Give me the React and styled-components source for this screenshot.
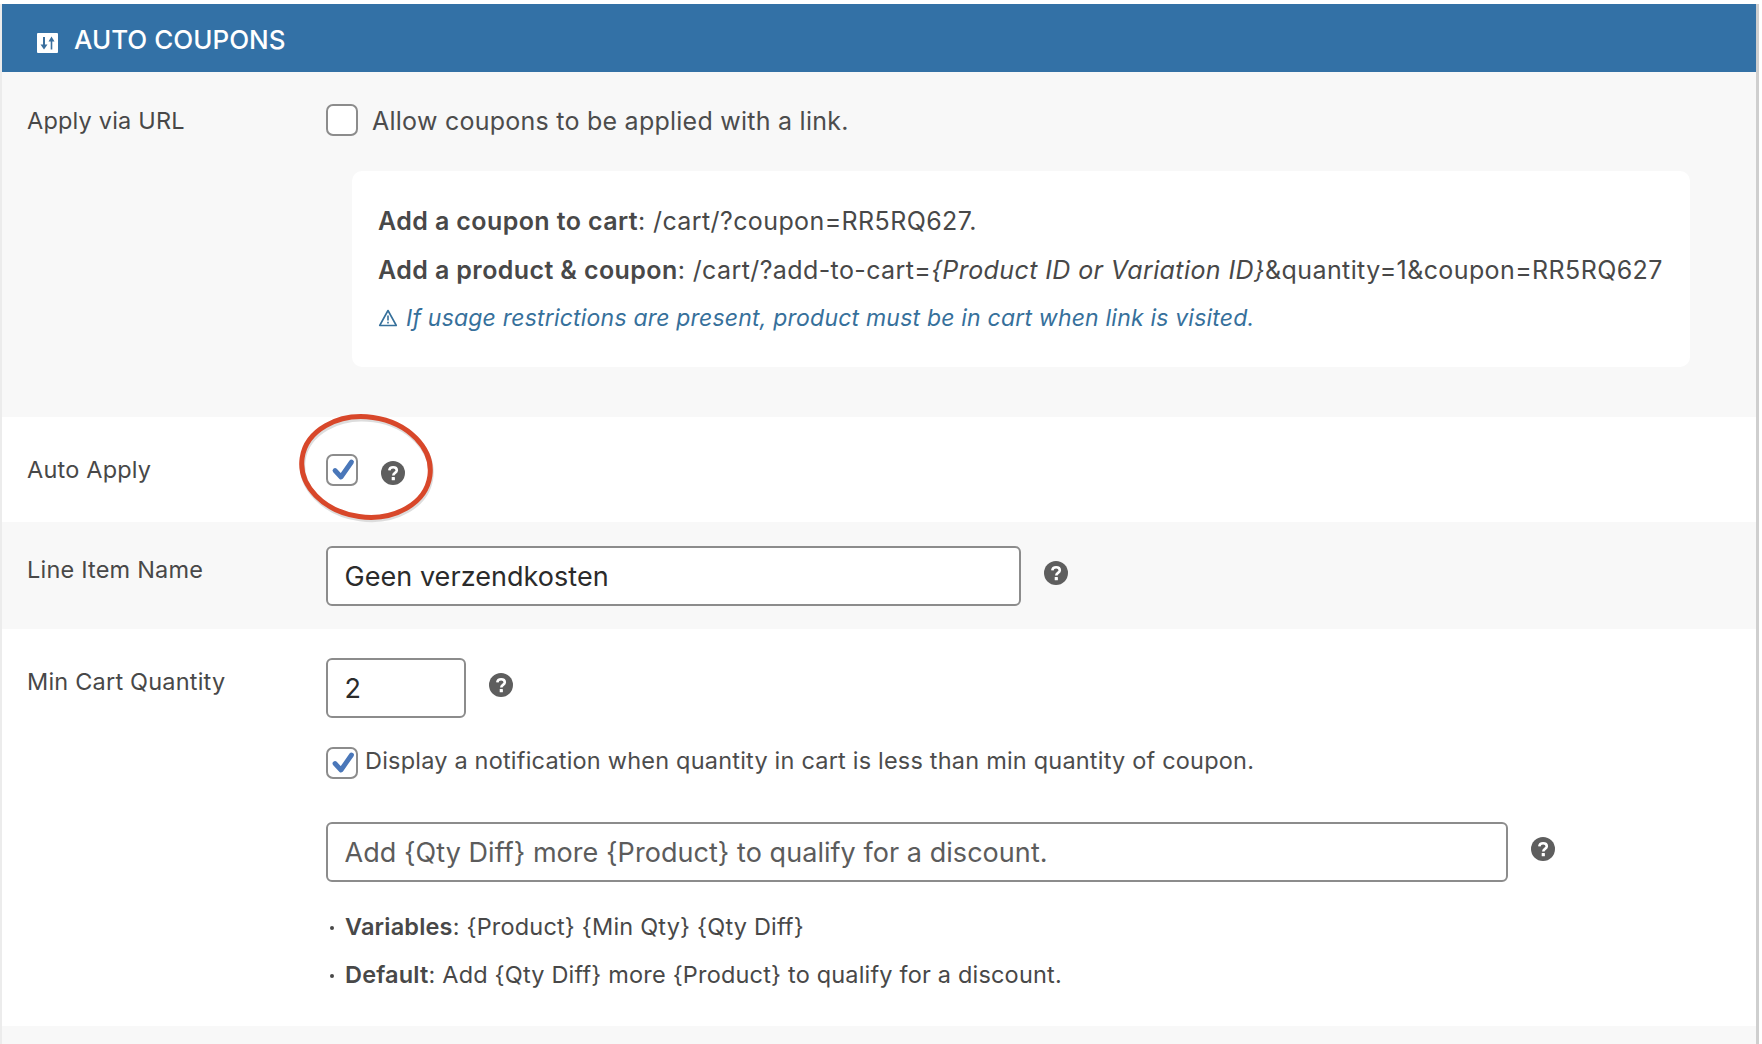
import React from 'react';
import styled, { createGlobalStyle } from 'styled-components';

const GlobalStyle = createGlobalStyle`
  html, body {
    margin: 0;
    padding: 0;
    background: #fff;
  }
  body {
    font-family: Inter, "Liberation Sans", sans-serif;
    color: #444;
    overflow: hidden;
  }
`;

const Page = styled.div`
  width: 1762px;
  height: 1044px;
  padding-top: 4px;
  box-sizing: border-box;
  overflow: hidden;
`;

const Panel = styled.div`
  width: 1759px;
  box-sizing: border-box;
  border-left: 2px solid #ececec;
  border-right: 3px solid #cfcfcf;
`;

const Header = styled.div`
  height: 68px;
  background: #3371a6;
  display: flex;
  align-items: center;
  padding-left: 33px;
  gap: 15px;
  color: #fff;
  font-size: 26px;
  font-weight: 500;
`;

const HeaderTitle = styled.span`
  position: relative;
  top: 1px;
`;

const Row = styled.div`
  display: grid;
  grid-template-columns: 299px 1fr;
  padding-left: 25px;
  height: ${(p) => p.$height}px;
  padding-top: ${(p) => p.$top}px;
  box-sizing: border-box;
  background: ${(p) => (p.$alt ? '#f8f8f8' : '#fff')};
`;

const Label = styled.div`
  font-size: 23.5px;
  line-height: 32px;
  letter-spacing: 0.2px;
  color: #484848;
  padding-top: ${(p) => p.$offset || 0}px;
`;

const Field = styled.div`
  display: flex;
  flex-direction: column;
  align-items: flex-start;
`;

const Line = styled.div`
  display: flex;
  align-items: center;
  gap: ${(p) => p.$gap || 0}px;
  margin-top: ${(p) => p.$mt || 0}px;
`;

const Box = styled.span`
  position: relative;
  display: block;
  flex: none;
  width: 32px;
  height: 32px;
  box-sizing: border-box;
  border: 2px solid #8c8c8c;
  border-radius: 7px;
  background: #fff;
`;

const CheckLabel = styled.span`
  font-size: ${(p) => p.$size}px;
  line-height: 32px;
  letter-spacing: ${(p) => p.$spacing}px;
  position: relative;
  top: ${(p) => p.$shift}px;
  color: #4c4c4c;
`;

const InfoBox = styled.div`
  width: 1338px;
  height: 196px;
  margin: 35px 0 0 26px;
  padding: 26px 0 0 26px;
  box-sizing: border-box;
  background: #fff;
  border-radius: 10px;
`;

const InfoLine = styled.div`
  font-size: 25px;
  line-height: 48.5px;
  letter-spacing: 0.4px;
  color: #484848;
  white-space: nowrap;
  strong {
    font-weight: 600;
  }
`;

const Warning = styled(InfoLine)`
  display: flex;
  align-items: center;
  gap: 8px;
  font-size: 23px;
  letter-spacing: 0.2px;
  font-style: italic;
  color: #36709b;
`;

const Input = styled.div`
  width: ${(p) => p.$width}px;
  height: 60px;
  box-sizing: border-box;
  padding-left: 16.5px;
  display: flex;
  align-items: center;
  flex: none;
  border: 2px solid #8c8c8c;
  border-radius: 6px;
  background: #fff;
  font-size: 27px;
  letter-spacing: 0.05px;
  color: ${(p) => (p.$placeholder ? '#5c5c5c' : '#2b2b2b')};
  white-space: nowrap;
`;

const Notes = styled.div`
  margin-top: 21px;
`;

const Note = styled.div`
  font-size: 23.5px;
  line-height: 48px;
  letter-spacing: 0.18px;
  color: #484848;
  display: flex;
  align-items: center;
  white-space: nowrap;
  strong {
    font-weight: 600;
  }
  &::before {
    content: '';
    width: 4px;
    height: 4px;
    margin: 2px 11px 0 4px;
    border-radius: 50%;
    background: #484848;
  }
`;

const AutoField = styled.div`
  position: relative;
`;

const Circled = styled.svg`
  position: absolute;
  left: -30px;
  top: -42px;
  width: 140px;
  height: 108px;
  pointer-events: none;
  overflow: visible;
`;

const HelpWrap = styled.svg`
  display: block;
  flex: none;
  width: 24px;
  height: 24px;
  margin-top: ${(p) => p.$mt || 0}px;
`;

const CheckMark = styled.svg`
  position: absolute;
  left: 0;
  top: 0;
  width: 28px;
  height: 28px;
`;

const ItemRow = styled(Line)`
  align-self: start;
`;

const HeaderIcon = () => (
  <svg width="24" height="20" viewBox="0 0 24 20" style={{ marginTop: 9 }}>
    <rect x="2" y="0" width="21" height="20" rx="1" fill="#fff" />
    <path d="M9 4v9" fill="none" stroke="#3a6f9e" strokeWidth="2" />
    <path d="M5.500 11.500h7L9 16.500z" fill="#3a6f9e" />
    <path d="M16.500 16.500V8" fill="none" stroke="#3a6f9e" strokeWidth="1.600" />
    <path d="M13.500 8.500h6l-3-5z" fill="#3a6f9e" />
  </svg>
);

const Help = ({ mt }) => (
  <HelpWrap $mt={mt} viewBox="0 0 24 24">
    <circle cx="12" cy="12" r="12" fill="#5e5e5e" />
    <path d="M8.300 9.400c.2-2 1.700-3.100 3.800-3.100 2.200 0 3.700 1.200 3.700 3 0 2.600-3.500 2.600-3.500 5.100" fill="none" stroke="#fff" strokeWidth="2.600" />
    <rect x="10.700" y="16" width="3.200" height="3.200" rx=".5" fill="#fff" />
  </HelpWrap>
);

const Check = () => (
  <CheckMark viewBox="0 0 28 28">
    <path d="M7 14.500l6 6.500L23.500 6" fill="none" stroke="#4a77b9" strokeWidth="4.800" strokeLinejoin="round" strokeLinecap="round" />
  </CheckMark>
);

const WarningIcon = () => (
  <svg width="20" height="20" viewBox="0 0 20 20">
    <path d="M10 2.500L18.300 17.500H1.700z" fill="none" stroke="#36709b" strokeWidth="1.600" strokeLinejoin="round" />
    <path d="M10 7.500v5M10 13.800v1.600" fill="none" stroke="#36709b" strokeWidth="1.600" />
  </svg>
);

export default function App() {
  return (
    <Page>
      <GlobalStyle />
      <Panel>
        <Header>
          <HeaderIcon />
          <HeaderTitle>AUTO COUPONS</HeaderTitle>
        </Header>

        <Row $alt $height={345} $top={32}>
          <Label $offset={1}>Apply via URL</Label>
          <Field>
            <Line $gap={14}>
              <Box />
              <CheckLabel $size={25} $spacing={0.25} $shift={1}>Allow coupons to be applied with a link.</CheckLabel>
            </Line>
            <InfoBox>
              <InfoLine>
                <strong>Add a coupon to cart</strong>: /cart/?coupon=RR5RQ627.
              </InfoLine>
              <InfoLine>
                <strong>Add a product &amp; coupon</strong>: /cart/?add-to-cart=<em>{'{Product ID or Variation ID}'}</em>&amp;quantity=1&amp;coupon=RR5RQ627
              </InfoLine>
              <Warning>
                <WarningIcon />
                If usage restrictions are present, product must be in cart when link is visited.
              </Warning>
            </InfoBox>
          </Field>
        </Row>

        <Row $height={105} $top={37}>
          <Label>Auto Apply</Label>
          <AutoField>
            <Line $gap={23}>
              <Box>
                <Check />
              </Box>
              <Help mt={5} />
            </Line>
            <Circled viewBox="0 0 140 108">
              <ellipse cx="70" cy="55" rx="64.500" ry="50" fill="none" stroke="#00000022" strokeWidth="5.500" transform="rotate(8 70 55) translate(1 2)" />
              <ellipse cx="70" cy="55" rx="64.500" ry="50" fill="none" stroke="#d8472a" strokeWidth="5" transform="rotate(8 70 55)" />
            </Circled>
          </AutoField>
        </Row>

        <Row $alt $height={107} $top={24}>
          <Label $offset={8}>Line Item Name</Label>
          <ItemRow $gap={23}>
            <Input $width={695}>Geen verzendkosten</Input>
            <Help mt={-7} />
          </ItemRow>
        </Row>

        <Row $height={397} $top={29}>
          <Label $offset={8}>Min Cart Quantity</Label>
          <Field>
            <Line $gap={23}>
              <Input $width={140}>2</Input>
              <Help mt={-7} />
            </Line>
            <Line $gap={7} $mt={29}>
              <Box>
                <Check />
              </Box>
              <CheckLabel $size={23.5} $spacing={0.2} $shift={-2}>Display a notification when quantity in cart is less than min quantity of coupon.</CheckLabel>
            </Line>
            <Line $gap={23} $mt={43}>
              <Input $width={1182} $placeholder>Add {'{Qty Diff}'} more {'{Product}'} to qualify for a discount.</Input>
              <Help mt={-7} />
            </Line>
            <Notes>
              <Note>
                <span><strong>Variables</strong>: {'{Product} {Min Qty} {Qty Diff}'}</span>
              </Note>
              <Note>
                <span><strong>Default</strong>: Add {'{Qty Diff}'} more {'{Product}'} to qualify for a discount.</span>
              </Note>
            </Notes>
          </Field>
        </Row>

        <Row $alt $height={18} $top={0} />
      </Panel>
    </Page>
  );
}
